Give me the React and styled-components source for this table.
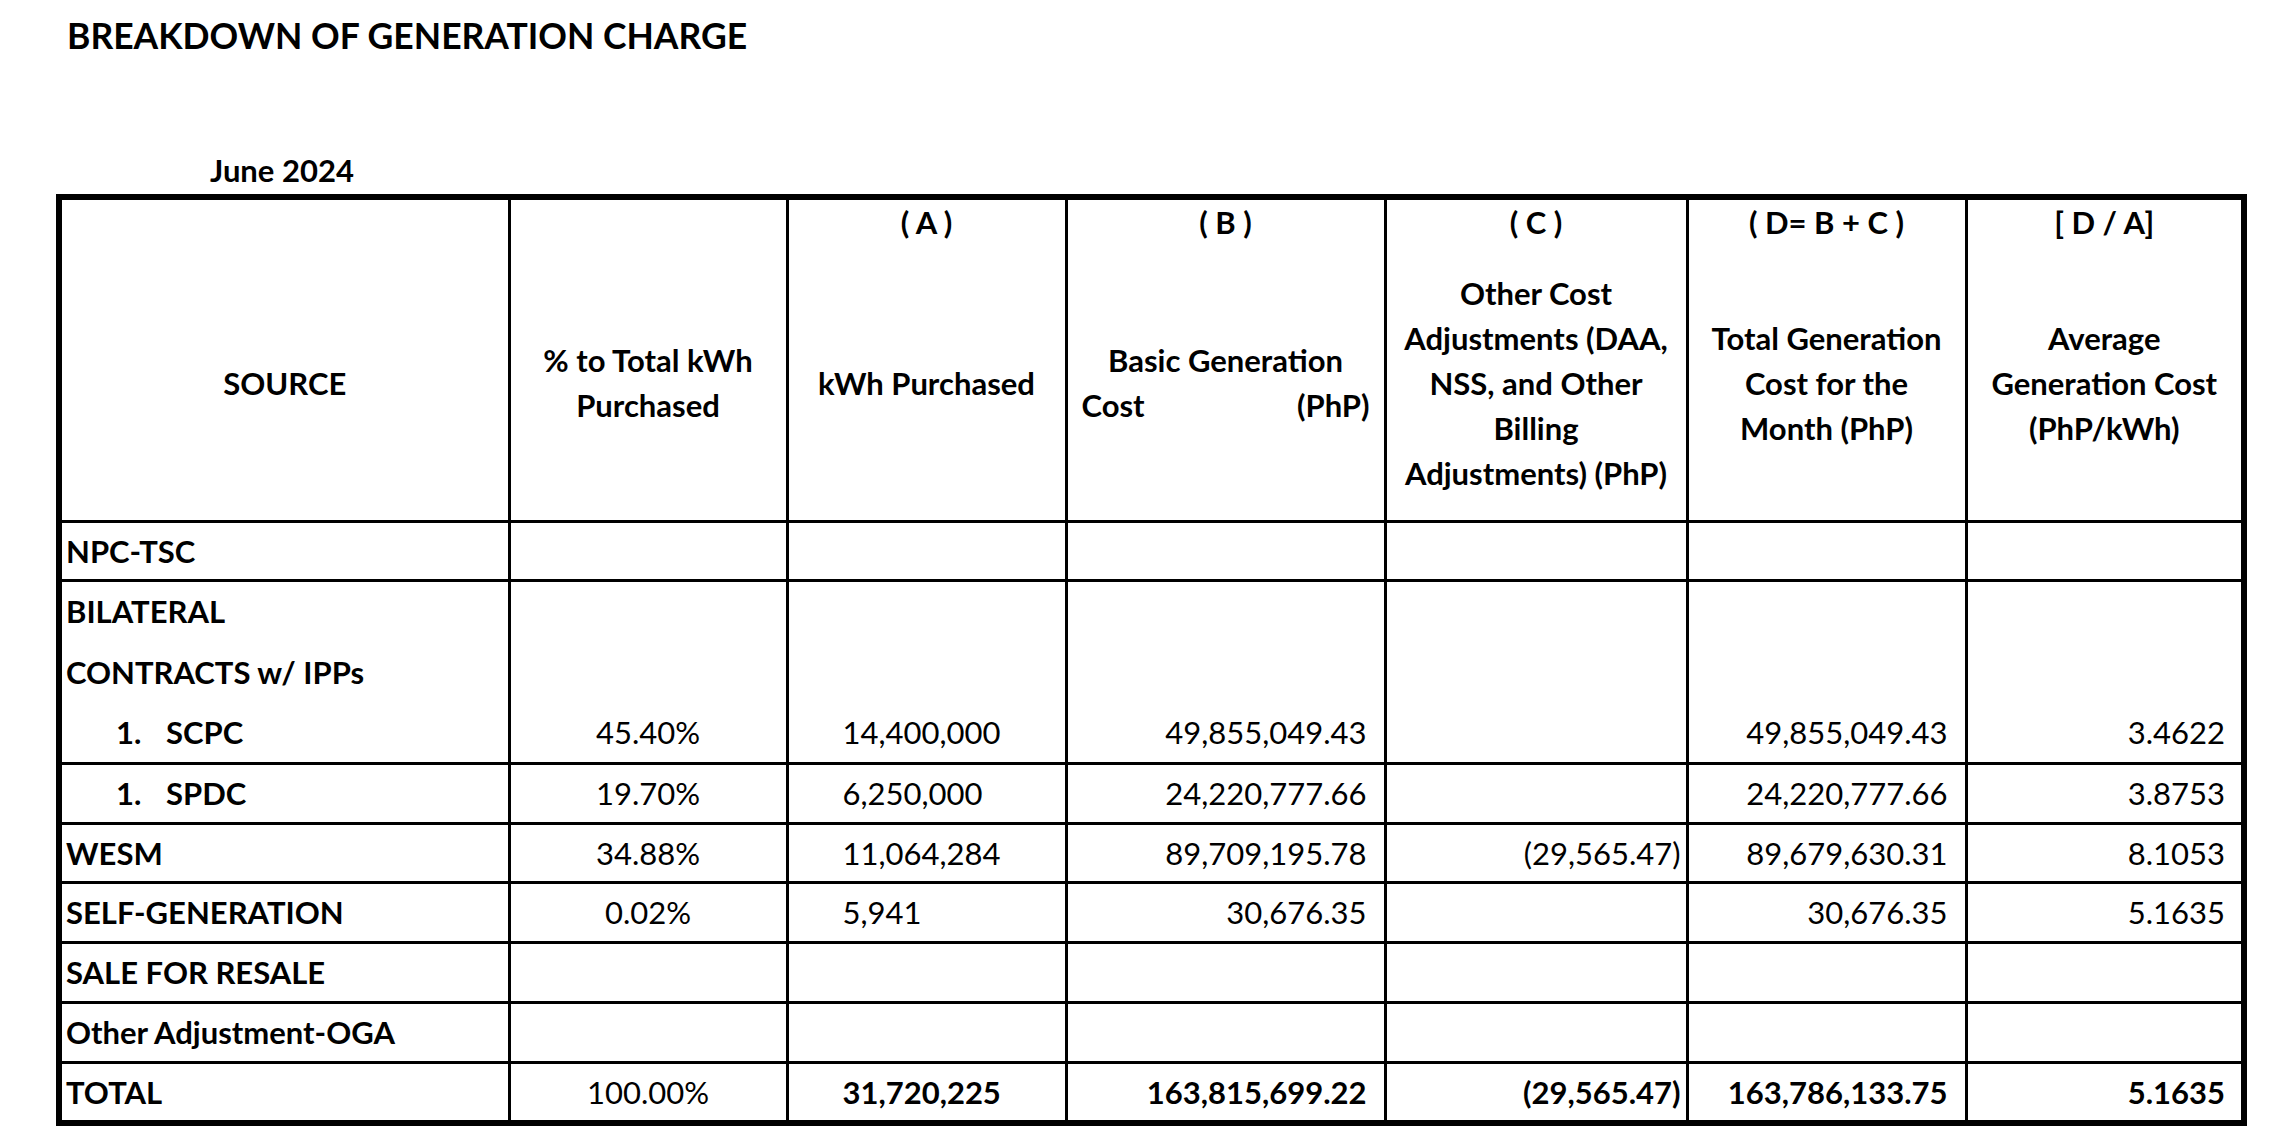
import React from "react";
import styled, { createGlobalStyle } from "styled-components";

const GlobalStyle = createGlobalStyle`
  html, body {
    margin: 0;
    padding: 0;
    background: #fff;
  }
  body {
    font-family: Lato, "Open Sans", sans-serif;
    color: #000;
  }
`;

const Page = styled.div`
  width: 2287px;
  height: 1144px;
  padding: 14px 0 0 56px;
  box-sizing: border-box;
`;

const Title = styled.h1`
  margin: 0 0 0 11px;
  font-size: 35.5px;
  line-height: 44px;
  font-weight: 700;
`;

const Period = styled.div`
  margin: 92px 0 4px 154px;
  font-size: 31px;
  line-height: 40px;
  font-weight: 700;
`;

const Sheet = styled.table`
  border-collapse: collapse;
  table-layout: fixed;
  width: 2185px;
  border: 6px solid #000;
  font-size: 31px;
`;

const Row = styled.tr`
  height: ${p => p.$h || 60}px;
`;

const Cell = styled.td`
  border: 3px solid #000;
  border-bottom-style: ${p => (p.$open ? "hidden" : "solid")};
  padding: 0 ${p => p.$pr || 0}px 0 ${p => p.$pl || 0}px;
  text-align: ${p => p.$align || "left"};
  vertical-align: middle;
  font-weight: ${p => (p.$bold ? 700 : 400)};
  line-height: 40px;
  white-space: nowrap;
`;

const HeadCell = styled.th`
  border: 3px solid #000;
  border-bottom-style: ${p => (p.$open ? "hidden" : "solid")};
  padding: 0;
  text-align: center;
  vertical-align: ${p => (p.$top ? "top" : "middle")};
  font-weight: 700;
  line-height: 45px;
`;

const Spread = styled.span`
  display: flex;
  justify-content: space-between;
  padding: 0 14px;
`;

const ItemLabel = styled.span`
  display: inline-flex;
  padding-left: 50px;
`;

const ItemNo = styled.span`
  width: 50px;
`;

const widths = [450, 278, 279, 319, 302, 279, 278];

const rows = [
  { label: "NPC-TSC", h: 59 },
  { label: "BILATERAL", open: true, h: 61 },
  { label: "CONTRACTS w/ IPPs", open: true, h: 61 },
  { item: "SCPC", pct: "45.40%", kwh: "14,400,000", basic: "49,855,049.43", total: "49,855,049.43", avg: "3.4622", h: 61 },
  { item: "SPDC", pct: "19.70%", kwh: "6,250,000", basic: "24,220,777.66", total: "24,220,777.66", avg: "3.8753" },
  { label: "WESM", pct: "34.88%", kwh: "11,064,284", basic: "89,709,195.78", other: "(29,565.47)", total: "89,679,630.31", avg: "8.1053", h: 59 },
  { label: "SELF-GENERATION", pct: "0.02%", kwh: "5,941", basic: "30,676.35", total: "30,676.35", avg: "5.1635" },
  { label: "SALE FOR RESALE" },
  { label: "Other Adjustment-OGA" },
  { label: "TOTAL", pct: "100.00%", kwh: "31,720,225", basic: "163,815,699.22", other: "(29,565.47)", total: "163,786,133.75", avg: "5.1635", bold: true, h: 61 },
];

function App() {
  return (
    <Page>
      <GlobalStyle />
      <Title>BREAKDOWN OF GENERATION CHARGE</Title>
      <Period>June 2024</Period>
      <Sheet>
        <colgroup>
          {widths.map((w, i) => (
            <col key={i} style={{ width: w }} />
          ))}
        </colgroup>
        <thead>
          <Row $h={50}>
            <HeadCell $open />
            <HeadCell $open />
            <HeadCell $open $top>( A )</HeadCell>
            <HeadCell $open $top>( B )</HeadCell>
            <HeadCell $open $top>( C )</HeadCell>
            <HeadCell $open $top>( D= B + C )</HeadCell>
            <HeadCell $open $top>[ D / A]</HeadCell>
          </Row>
          <Row $h={274}>
            <HeadCell>SOURCE</HeadCell>
            <HeadCell>% to Total kWh<br />Purchased</HeadCell>
            <HeadCell>kWh Purchased</HeadCell>
            <HeadCell>
              Basic Generation
              <Spread>
                <span>Cost</span>
                <span>(PhP)</span>
              </Spread>
            </HeadCell>
            <HeadCell>
              Other Cost<br />Adjustments (DAA,<br />NSS, and Other<br />Billing<br />Adjustments) (PhP)
            </HeadCell>
            <HeadCell>Total Generation<br />Cost for the<br />Month (PhP)</HeadCell>
            <HeadCell>Average<br />Generation Cost<br />(PhP/kWh)</HeadCell>
          </Row>
        </thead>
        <tbody>
          {rows.map((r, i) => (
            <Row key={i} $h={r.h}>
              <Cell $open={r.open} $bold $pl={4}>
                {r.item ? (
                  <ItemLabel>
                    <ItemNo>1.</ItemNo>
                    {r.item}
                  </ItemLabel>
                ) : (
                  r.label
                )}
              </Cell>
              <Cell $open={r.open} $align="center">{r.pct}</Cell>
              <Cell $open={r.open} $pl={54} $bold={r.bold}>{r.kwh}</Cell>
              <Cell $open={r.open} $align="right" $pr={17} $bold={r.bold}>{r.basic}</Cell>
              <Cell $open={r.open} $align="right" $pr={5} $bold={r.bold}>{r.other}</Cell>
              <Cell $open={r.open} $align="right" $pr={17} $bold={r.bold}>{r.total}</Cell>
              <Cell $open={r.open} $align="right" $pr={16} $bold={r.bold}>{r.avg}</Cell>
            </Row>
          ))}
        </tbody>
      </Sheet>
    </Page>
  );
}

export default App;
